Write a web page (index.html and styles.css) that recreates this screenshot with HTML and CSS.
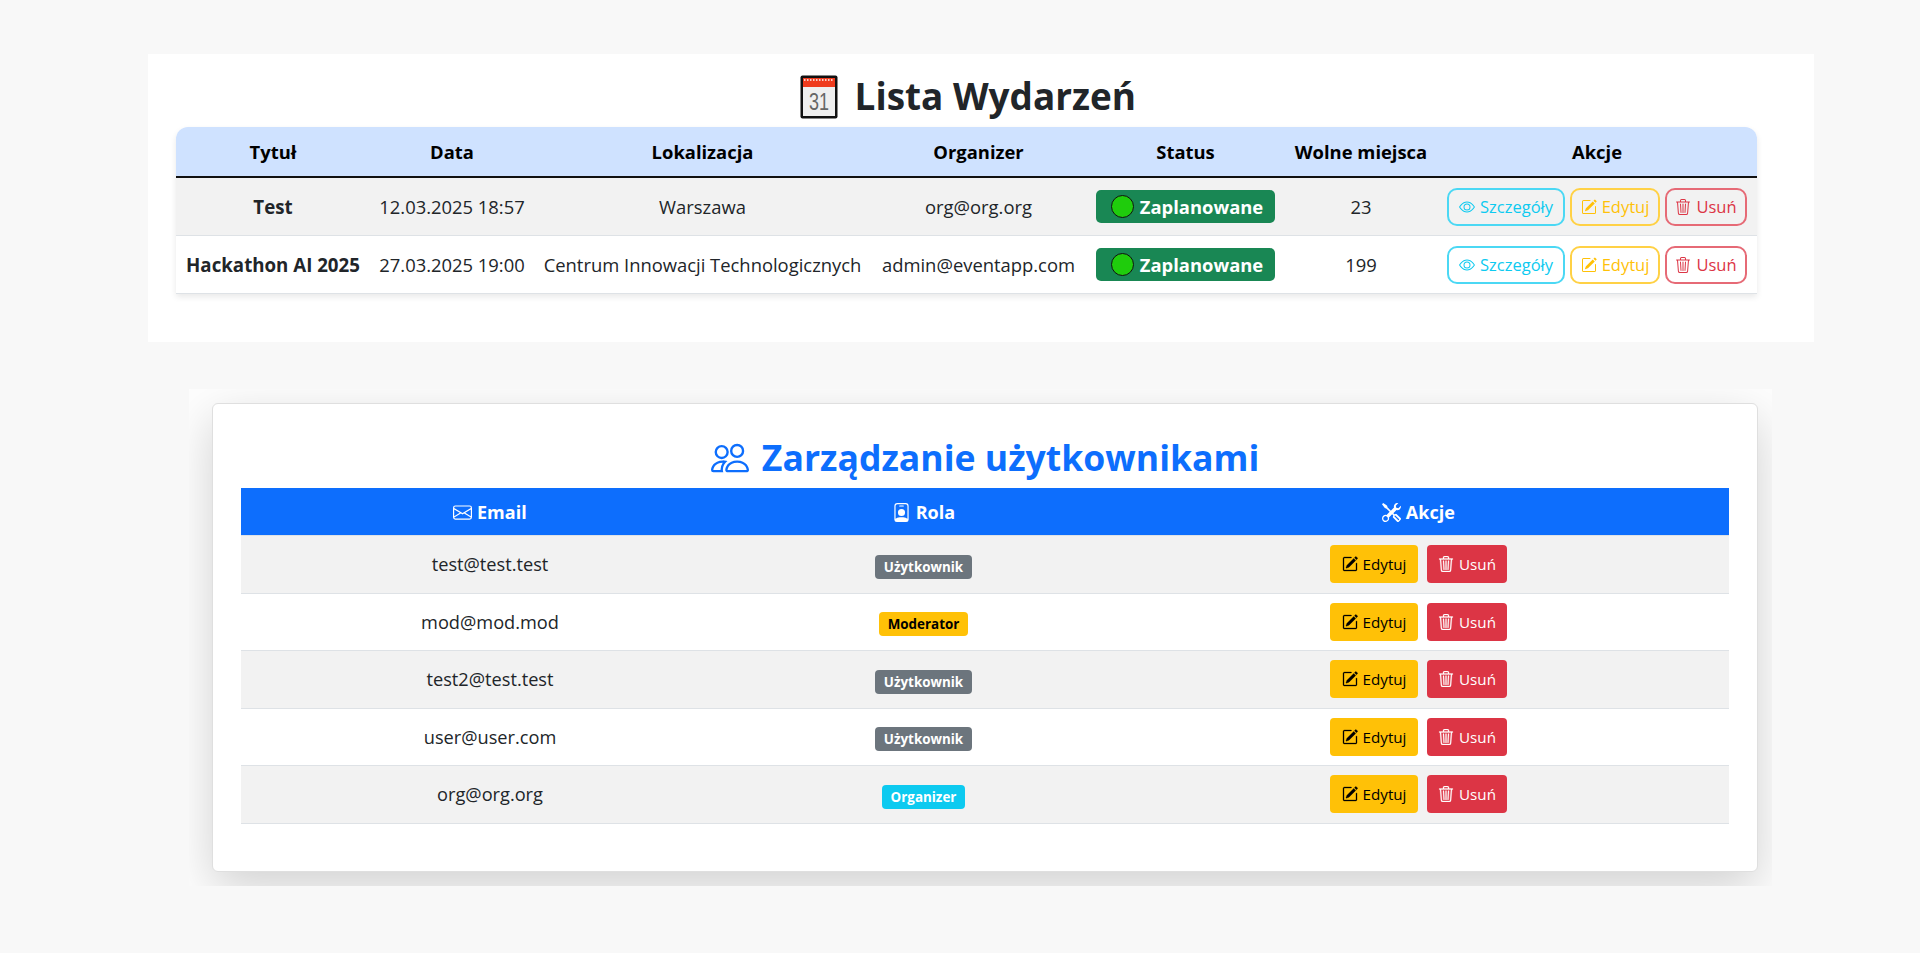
FILE: index.html
```html
<!DOCTYPE html>
<html lang="pl">
<head>
    <meta charset="UTF-8">
    <meta name="viewport" content="width=device-width, initial-scale=1.0">
    <title>Lista Wydarzeń</title>
    <link rel="stylesheet" href="styles.css">
</head>
<body>

<svg class="sprite" xmlns="http://www.w3.org/2000/svg">
    <symbol id="i-eye" viewBox="0 0 16 16"><path d="M16 8s-3-5.5-8-5.5S0 8 0 8s3 5.5 8 5.5S16 8 16 8M1.173 8a13 13 0 0 1 1.66-2.043C4.12 4.668 5.88 3.5 8 3.5s3.879 1.168 5.168 2.457A13 13 0 0 1 14.828 8q-.086.13-.195.288c-.335.48-.83 1.12-1.465 1.755C11.879 11.332 10.119 12.5 8 12.5s-3.879-1.168-5.168-2.457A13 13 0 0 1 1.172 8z"/><path d="M8 5.5a2.5 2.5 0 1 0 0 5 2.5 2.5 0 0 0 0-5M4.5 8a3.5 3.5 0 1 1 7 0 3.5 3.5 0 0 1-7 0"/></symbol>
    <symbol id="i-edit" viewBox="0 0 16 16"><path d="M15.502 1.94a.5.5 0 0 1 0 .706L14.459 3.69l-2-2L13.502.646a.5.5 0 0 1 .707 0l1.293 1.293zm-1.75 2.456-2-2L4.939 9.21a.5.5 0 0 0-.121.196l-.805 2.414a.25.25 0 0 0 .316.316l2.414-.805a.5.5 0 0 0 .196-.12l6.813-6.814z"/><path fill-rule="evenodd" d="M1 13.5A1.5 1.5 0 0 0 2.5 15h11a1.5 1.5 0 0 0 1.5-1.5v-6a.5.5 0 0 0-1 0v6a.5.5 0 0 1-.5.5h-11a.5.5 0 0 1-.5-.5v-11a.5.5 0 0 1 .5-.5H9a.5.5 0 0 0 0-1H2.5A1.5 1.5 0 0 0 1 2.5z"/></symbol>
    <symbol id="i-trash" viewBox="0 0 16 16"><path d="M6.5 1h3a.5.5 0 0 1 .5.5v1H6v-1a.5.5 0 0 1 .5-.5M11 2.5v-1A1.5 1.5 0 0 0 9.5 0h-3A1.5 1.5 0 0 0 5 1.5v1H1.5a.5.5 0 0 0 0 1h.538l.853 10.66A2 2 0 0 0 4.885 16h6.23a2 2 0 0 0 1.994-1.84l.853-10.66h.538a.5.5 0 0 0 0-1zm1.958 1-.846 10.58a1 1 0 0 1-.997.92h-6.23a1 1 0 0 1-.997-.92L3.042 3.5zm-7.487 1a.5.5 0 0 1 .528.47l.5 8.5a.5.5 0 0 1-.998.06L5 5.03a.5.5 0 0 1 .47-.53Zm5.058 0a.5.5 0 0 1 .47.53l-.5 8.5a.5.5 0 1 1-.998-.06l.5-8.5a.5.5 0 0 1 .528-.47M8 4.5a.5.5 0 0 1 .5.5v8.5a.5.5 0 0 1-1 0V5a.5.5 0 0 1 .5-.5"/></symbol>
    <symbol id="i-people" viewBox="0 0 16 16"><path d="M15 14s1 0 1-1-1-4-5-4-5 3-5 4 1 1 1 1zm-7.978-1L7 12.996c.001-.264.167-1.03.76-1.72C8.312 10.629 9.282 10 11 10c1.717 0 2.687.63 3.24 1.276.593.69.758 1.457.76 1.72l-.008.002-.014.002zM11 7a2 2 0 1 0 0-4 2 2 0 0 0 0 4m3-2a3 3 0 1 1-6 0 3 3 0 0 1 6 0M6.936 9.28a6 6 0 0 0-1.23-.247A7 7 0 0 0 5 9c-4 0-5 3-5 4q0 1 1 1h4.216A2.24 2.24 0 0 1 5 13c0-1.01.377-2.042 1.09-2.904.243-.294.526-.569.846-.816M4.92 10A5.5 5.5 0 0 0 4 13H1c0-.26.164-1.03.76-1.724.545-.636 1.492-1.256 3.16-1.275ZM1.5 5.5a3 3 0 1 1 6 0 3 3 0 0 1-6 0m3-2a2 2 0 1 0 0 4 2 2 0 0 0 0-4"/></symbol>
    <symbol id="i-envelope" viewBox="0 0 16 16"><path d="M0 4a2 2 0 0 1 2-2h12a2 2 0 0 1 2 2v8a2 2 0 0 1-2 2H2a2 2 0 0 1-2-2zm2-1a1 1 0 0 0-1 1v.217l7 4.2 7-4.2V4a1 1 0 0 0-1-1zm13 2.383-4.708 2.825L15 11.105zm-.034 6.876-5.64-3.471L8 9.583l-1.326-.795-5.64 3.47A1 1 0 0 0 2 13h12a1 1 0 0 0 .966-.741M1 11.105l4.708-2.897L1 5.383z"/></symbol>
    <symbol id="i-badge" viewBox="0 0 16 16"><path d="M6.5 2a.5.5 0 0 0 0 1h3a.5.5 0 0 0 0-1zM11 8a3 3 0 1 1-6 0 3 3 0 0 1 6 0"/><path d="M4.5 0A2.5 2.5 0 0 0 2 2.5V14a2 2 0 0 0 2 2h8a2 2 0 0 0 2-2V2.5A2.5 2.5 0 0 0 11.5 0zM3 2.5A1.5 1.5 0 0 1 4.5 1h7A1.5 1.5 0 0 1 13 2.5v10.795a4.2 4.2 0 0 0-.776-.492C11.392 12.387 10.063 12 8 12s-3.392.387-4.224.803a4.2 4.2 0 0 0-.776.492z"/></symbol>
    <symbol id="i-tools" viewBox="0 0 16 16"><path d="M1 0 0 1l2.2 3.081a1 1 0 0 0 .815.419h.07a1 1 0 0 1 .708.293l2.675 2.675-2.617 2.654A3.003 3.003 0 0 0 0 13a3 3 0 1 0 5.878-.851l2.654-2.617.968.968-.305.914a1 1 0 0 0 .242 1.023l3.27 3.27a.997.997 0 0 0 1.414 0l1.586-1.586a.997.997 0 0 0 0-1.414l-3.27-3.27a1 1 0 0 0-1.023-.242L10.5 9.5l-.96-.96 2.68-2.643A3.005 3.005 0 0 0 16 3q0-.405-.102-.777l-2.14 2.141L12 4l-.364-1.757L13.777.102a3 3 0 0 0-3.675 3.68L7.462 6.46 4.793 3.793a1 1 0 0 1-.293-.707v-.071a1 1 0 0 0-.419-.814zm9.646 10.646a.5.5 0 0 1 .708 0l2.914 2.915a.5.5 0 0 1-.707.707l-2.915-2.914a.5.5 0 0 1 0-.708M3 11l.471.242.529.026.287.445.445.287.026.529L5 13l-.242.471-.026.529-.445.287-.287.445-.529.026L3 15l-.471-.242L2 14.732l-.287-.445L1.268 14l-.026-.529L1 13l.242-.471.026-.529.445-.287.287-.445.529-.026z"/></symbol>
</svg>

<section class="events-panel">
    <h1 class="page-title">
        <svg class="calendar" viewBox="0 0 38 44">
            <rect x="0.5" y="0.5" width="37" height="43" rx="2" fill="#111"/>
            <rect x="3" y="3" width="32" height="38" fill="#efefef"/>
            <rect x="3" y="3" width="32" height="9" fill="#ef3b1d"/>
            <line x1="4" y1="5" x2="34" y2="5" stroke="#fff" stroke-width="1.5" stroke-dasharray="1.5 1.5"/>
            <text x="19" y="35" text-anchor="middle" textLength="20" lengthAdjust="spacingAndGlyphs" class="calendar-day">31</text>
        </svg>
        Lista Wydarzeń
    </h1>
    <table class="events-table">
        <thead>
            <tr>
                <th class="col-title">Tytuł</th>
                <th class="col-date">Data</th>
                <th class="col-place">Lokalizacja</th>
                <th class="col-org">Organizer</th>
                <th class="col-status">Status</th>
                <th class="col-free">Wolne miejsca</th>
                <th class="col-actions">Akcje</th>
            </tr>
        </thead>
        <tbody>
            <tr>
                <td><strong>Test</strong></td>
                <td>12.03.2025 18:57</td>
                <td>Warszawa</td>
                <td>org@org.org</td>
                <td><span class="status"><i class="dot"></i>Zaplanowane</span></td>
                <td>23</td>
                <td>
                    <div class="btn-row">
                        <a class="btn btn-info"><svg class="icon"><use href="#i-eye"/></svg>Szczegóły</a>
                        <a class="btn btn-warn"><svg class="icon"><use href="#i-edit"/></svg>Edytuj</a>
                        <a class="btn btn-danger"><svg class="icon"><use href="#i-trash"/></svg>Usuń</a>
                    </div>
                </td>
            </tr>
            <tr>
                <td><strong>Hackathon AI 2025</strong></td>
                <td>27.03.2025 19:00</td>
                <td>Centrum Innowacji Technologicznych</td>
                <td>admin@eventapp.com</td>
                <td><span class="status"><i class="dot"></i>Zaplanowane</span></td>
                <td>199</td>
                <td>
                    <div class="btn-row">
                        <a class="btn btn-info"><svg class="icon"><use href="#i-eye"/></svg>Szczegóły</a>
                        <a class="btn btn-warn"><svg class="icon"><use href="#i-edit"/></svg>Edytuj</a>
                        <a class="btn btn-danger"><svg class="icon"><use href="#i-trash"/></svg>Usuń</a>
                    </div>
                </td>
            </tr>
        </tbody>
    </table>
</section>

<section class="users-panel">
    <div class="users-card">
        <h1 class="page-title users-title">
            <svg class="title-icon"><use href="#i-people"/></svg>
            Zarządzanie użytkownikami
        </h1>
        <table class="users-table">
            <thead>
                <tr>
                    <th class="col-email"><svg class="icon"><use href="#i-envelope"/></svg> Email</th>
                    <th class="col-role"><svg class="icon"><use href="#i-badge"/></svg> Rola</th>
                    <th><svg class="icon"><use href="#i-tools"/></svg> Akcje</th>
                </tr>
            </thead>
            <tbody>
                <tr>
                    <td>test@test.test</td>
                    <td><span class="role role-user">Użytkownik</span></td>
                    <td>
                        <div class="btn-row wide">
                            <a class="btn btn-solid-warn"><svg class="icon"><use href="#i-edit"/></svg>Edytuj</a>
                            <a class="btn btn-solid-danger"><svg class="icon"><use href="#i-trash"/></svg>Usuń</a>
                        </div>
                    </td>
                </tr>
                <tr>
                    <td>mod@mod.mod</td>
                    <td><span class="role role-mod">Moderator</span></td>
                    <td>
                        <div class="btn-row wide">
                            <a class="btn btn-solid-warn"><svg class="icon"><use href="#i-edit"/></svg>Edytuj</a>
                            <a class="btn btn-solid-danger"><svg class="icon"><use href="#i-trash"/></svg>Usuń</a>
                        </div>
                    </td>
                </tr>
                <tr>
                    <td>test2@test.test</td>
                    <td><span class="role role-user">Użytkownik</span></td>
                    <td>
                        <div class="btn-row wide">
                            <a class="btn btn-solid-warn"><svg class="icon"><use href="#i-edit"/></svg>Edytuj</a>
                            <a class="btn btn-solid-danger"><svg class="icon"><use href="#i-trash"/></svg>Usuń</a>
                        </div>
                    </td>
                </tr>
                <tr>
                    <td>user@user.com</td>
                    <td><span class="role role-user">Użytkownik</span></td>
                    <td>
                        <div class="btn-row wide">
                            <a class="btn btn-solid-warn"><svg class="icon"><use href="#i-edit"/></svg>Edytuj</a>
                            <a class="btn btn-solid-danger"><svg class="icon"><use href="#i-trash"/></svg>Usuń</a>
                        </div>
                    </td>
                </tr>
                <tr>
                    <td>org@org.org</td>
                    <td><span class="role role-org">Organizer</span></td>
                    <td>
                        <div class="btn-row wide">
                            <a class="btn btn-solid-warn"><svg class="icon"><use href="#i-edit"/></svg>Edytuj</a>
                            <a class="btn btn-solid-danger"><svg class="icon"><use href="#i-trash"/></svg>Usuń</a>
                        </div>
                    </td>
                </tr>
            </tbody>
        </table>
    </div>
</section>

</body>
</html>
```

FILE: styles.css
```css
body {
    font-family: "Open Sans", "Noto Sans", sans-serif;
    font-size: 18.4px;
    margin: 0;
    padding: 54px 0 0;
    background-color: #f8f8f8;
    color: #212529;
}

.sprite {
    display: none;
}

.icon {
    width: 16px;
    height: 16px;
    fill: currentColor;
    vertical-align: -2px;
    flex-shrink: 0;
}

.page-title {
    margin: 0;
    height: 56px;
    font-size: 36.9px;
    line-height: 50px;
    font-weight: 700;
    text-align: center;
    color: #212529;
}

/* events */
.events-panel {
    width: 1581px;
    height: 271px;
    margin-left: 148px;
    padding: 17px 57px 0 28px;
    background-color: white;
}

.calendar {
    width: 38px;
    height: 44px;
    vertical-align: -9px;
    margin: 0 7px 0 3px;
}

.calendar-day {
    font-family: "Liberation Sans", sans-serif;
    font-size: 24px;
    font-weight: 400;
    fill: #666;
}

table {
    width: 100%;
    border-collapse: collapse;
    table-layout: fixed;
}

td, th {
    padding: 0;
    text-align: center;
}

strong {
    font-size: 18.7px;
}

.events-table {
    border-collapse: separate;
    border-spacing: 0;
    box-shadow: 0 3px 6px rgba(0, 0, 0, 0.09);
    border-radius: 12px 12px 0 0;
}

.events-table th {
    height: 49px;
    background-color: #cfe2ff;
    border-bottom: 2px solid #111;
    font-weight: 700;
    color: #000;
}

.events-table th:first-child {
    border-top-left-radius: 12px;
}

.events-table th:last-child {
    border-top-right-radius: 12px;
}

.events-table td {
    height: 57px;
    border-bottom: 1px solid #dee2e6;
}

.events-table tbody tr:nth-child(odd) td,
.users-table tbody tr:nth-child(odd) td {
    background-color: #f2f2f2;
}

.col-title { width: 194px; }
.col-date { width: 164px; }
.col-place { width: 337px; }
.col-org { width: 215px; }
.col-status { width: 199px; }
.col-free { width: 152px; }

.status {
    display: inline-flex;
    align-items: center;
    justify-content: center;
    gap: 6px;
    box-sizing: border-box;
    width: 179px;
    height: 33px;
    padding-left: 3px;
    border-radius: 5px;
    background-color: #198754;
    color: white;
    font-weight: 700;
    vertical-align: middle;
}

.dot {
    width: 21px;
    height: 21px;
    border: 1px solid #111;
    border-radius: 50%;
    background-color: #1fcc0c;
}

.btn-row {
    display: flex;
    justify-content: center;
    gap: 5px;
}

.btn-row.wide {
    gap: 9px;
}

.btn {
    display: inline-flex;
    align-items: center;
    justify-content: center;
    gap: 5px;
    box-sizing: border-box;
    height: 38px;
    border-radius: 10px;
    border: 2px solid;
    font-size: 16.5px;
}

.btn-info { color: #0dcaf0; border-color: #4bd8f4; width: 118px; }
.btn-warn { color: #ffc107; border-color: #ffd145; width: 90px; }
.btn-danger { color: #dc3545; border-color: #e66a76; width: 82px; }

.btn-solid-warn,
.btn-solid-danger {
    border-radius: 4px;
    border: none;
    font-size: 15.2px;
}

.btn-solid-warn .icon,
.btn-solid-danger .icon {
    stroke: currentColor;
    stroke-width: 0.3px;
}

.btn-solid-warn { background-color: #ffc107; color: #000; width: 88px; }
.btn-solid-danger { background-color: #dc3545; color: white; width: 80px; }

/* users */
.users-panel {
    width: 1546px;
    height: 483px;
    margin: 47px 0 0 189px;
    padding: 14px 14px 0 23px;
    background-color: #fdfdfd;
    overflow: hidden;
}

.users-card {
    box-sizing: border-box;
    height: 469px;
    padding: 28px 28px 0;
    border: 1px solid #dfdfdf;
    border-radius: 6px;
    background-color: white;
    box-shadow: 0 16px 48px rgba(0, 0, 0, 0.175);
}

.users-title {
    color: #0d6efd;
    font-size: 35.6px;
}

.title-icon {
    width: 38px;
    height: 38px;
    fill: currentColor;
    vertical-align: -6px;
    margin-right: 4px;
}

.users-table th {
    height: 47px;
    background-color: #0d6efd;
    border-bottom: 1px solid #dee2e6;
    color: white;
    font-size: 18px;
    font-weight: 700;
}

.users-table th .icon {
    width: 19px;
    height: 19px;
    vertical-align: -3px;
}

.users-table td {
    height: 56.5px;
    border-bottom: 1px solid #dee2e6;
    font-size: 18.2px;
}

.col-email { width: 498px; }
.col-role { width: 369px; }

.role {
    display: inline-block;
    height: 24px;
    line-height: 24px;
    padding: 0 8.5px;
    border-radius: 4px;
    font-size: 13.4px;
    font-weight: 700;
    vertical-align: -3px;
}

.role-user { background-color: #6c757d; color: white; }
.role-mod { background-color: #ffc107; color: #000; }
.role-org { background-color: #0dcaf0; color: white; }
```
